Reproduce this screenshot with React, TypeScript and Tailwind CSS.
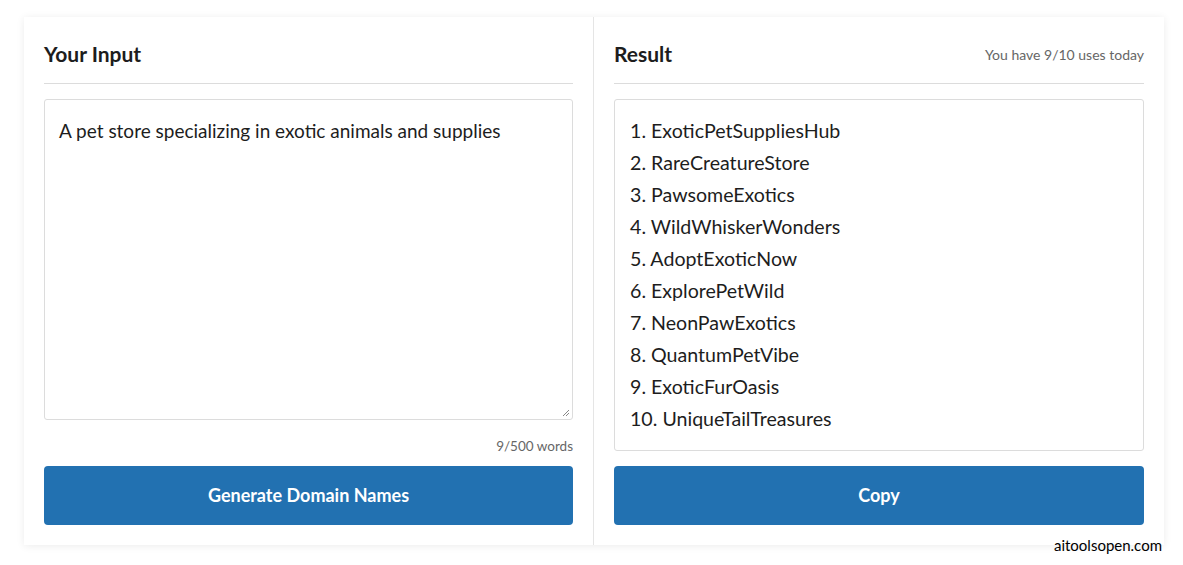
const names = [
  'ExoticPetSuppliesHub',
  'RareCreatureStore',
  'PawsomeExotics',
  'WildWhiskerWonders',
  'AdoptExoticNow',
  'ExplorePetWild',
  'NeonPawExotics',
  'QuantumPetVibe',
  'ExoticFurOasis',
  'UniqueTailTreasures',
]

const sans = "font-['Lato','Noto_Sans',sans-serif]"

export default function App() {
  return (
    <div className={`relative h-[565px] w-full bg-white px-[24px] pt-[17px] text-[#1d1d1d] ${sans}`}>
      <div className="flex h-[528px] w-[1140px] bg-white shadow-[0_1px_8px_rgba(0,0,0,0.08)]">
        {/* Input */}
        <div className="flex w-[570px] flex-col border-r border-[#e5e5e5] px-[20px] pt-[20px]">
          <div className="flex h-[34px] items-center">
            <h2 className="text-[21px] font-bold">Your Input</h2>
          </div>
          <div className="mt-[12px] border-t border-[#dcdcdc]" />
          <div className="relative mt-[15px] h-[321px] rounded-[3px] border border-[#dcdcdc] px-[14px] pt-[17px]">
            <p className="text-[19px] leading-[28px]">A pet store specializing in exotic animals and supplies</p>
            <svg className="absolute bottom-[2px] right-[2px]" width="9" height="9" viewBox="0 0 9 9">
              <path d="M8 2 L2 8 M8 5 L5 8" stroke="#888" strokeWidth="1" />
            </svg>
          </div>
          <div className="mt-[16px] text-right text-[13.5px] leading-[20px] text-[#666]">9/500 words</div>
          <button className="mt-[10px] h-[59px] w-full rounded-[4px] bg-[#2271b1] text-[18px] font-bold text-white">
            Generate Domain Names
          </button>
        </div>

        {/* Result */}
        <div className="flex w-[570px] flex-col px-[20px] pt-[20px]">
          <div className="flex h-[34px] items-center justify-between">
            <h2 className="text-[21px] font-bold">Result</h2>
            <span className="text-[14px] text-[#666]">You have 9/10 uses today</span>
          </div>
          <div className="mt-[12px] border-t border-[#dcdcdc]" />
          <div className="mt-[15px] h-[352px] rounded-[3px] border border-[#dcdcdc] px-[15px] pt-[15px]">
            <ol>
              {names.map((n, i) => (
                <li key={n} className="text-[19.6px] leading-[32px]">
                  {i + 1}. {n}
                </li>
              ))}
            </ol>
          </div>
          <button className="mt-[15px] h-[59px] w-full rounded-[4px] bg-[#2271b1] text-[18px] font-bold text-white">
            Copy
          </button>
        </div>
      </div>

      <span className="absolute right-[21px] top-[535px] text-[15px] leading-[20px] text-black">aitoolsopen.com</span>
    </div>
  )
}
